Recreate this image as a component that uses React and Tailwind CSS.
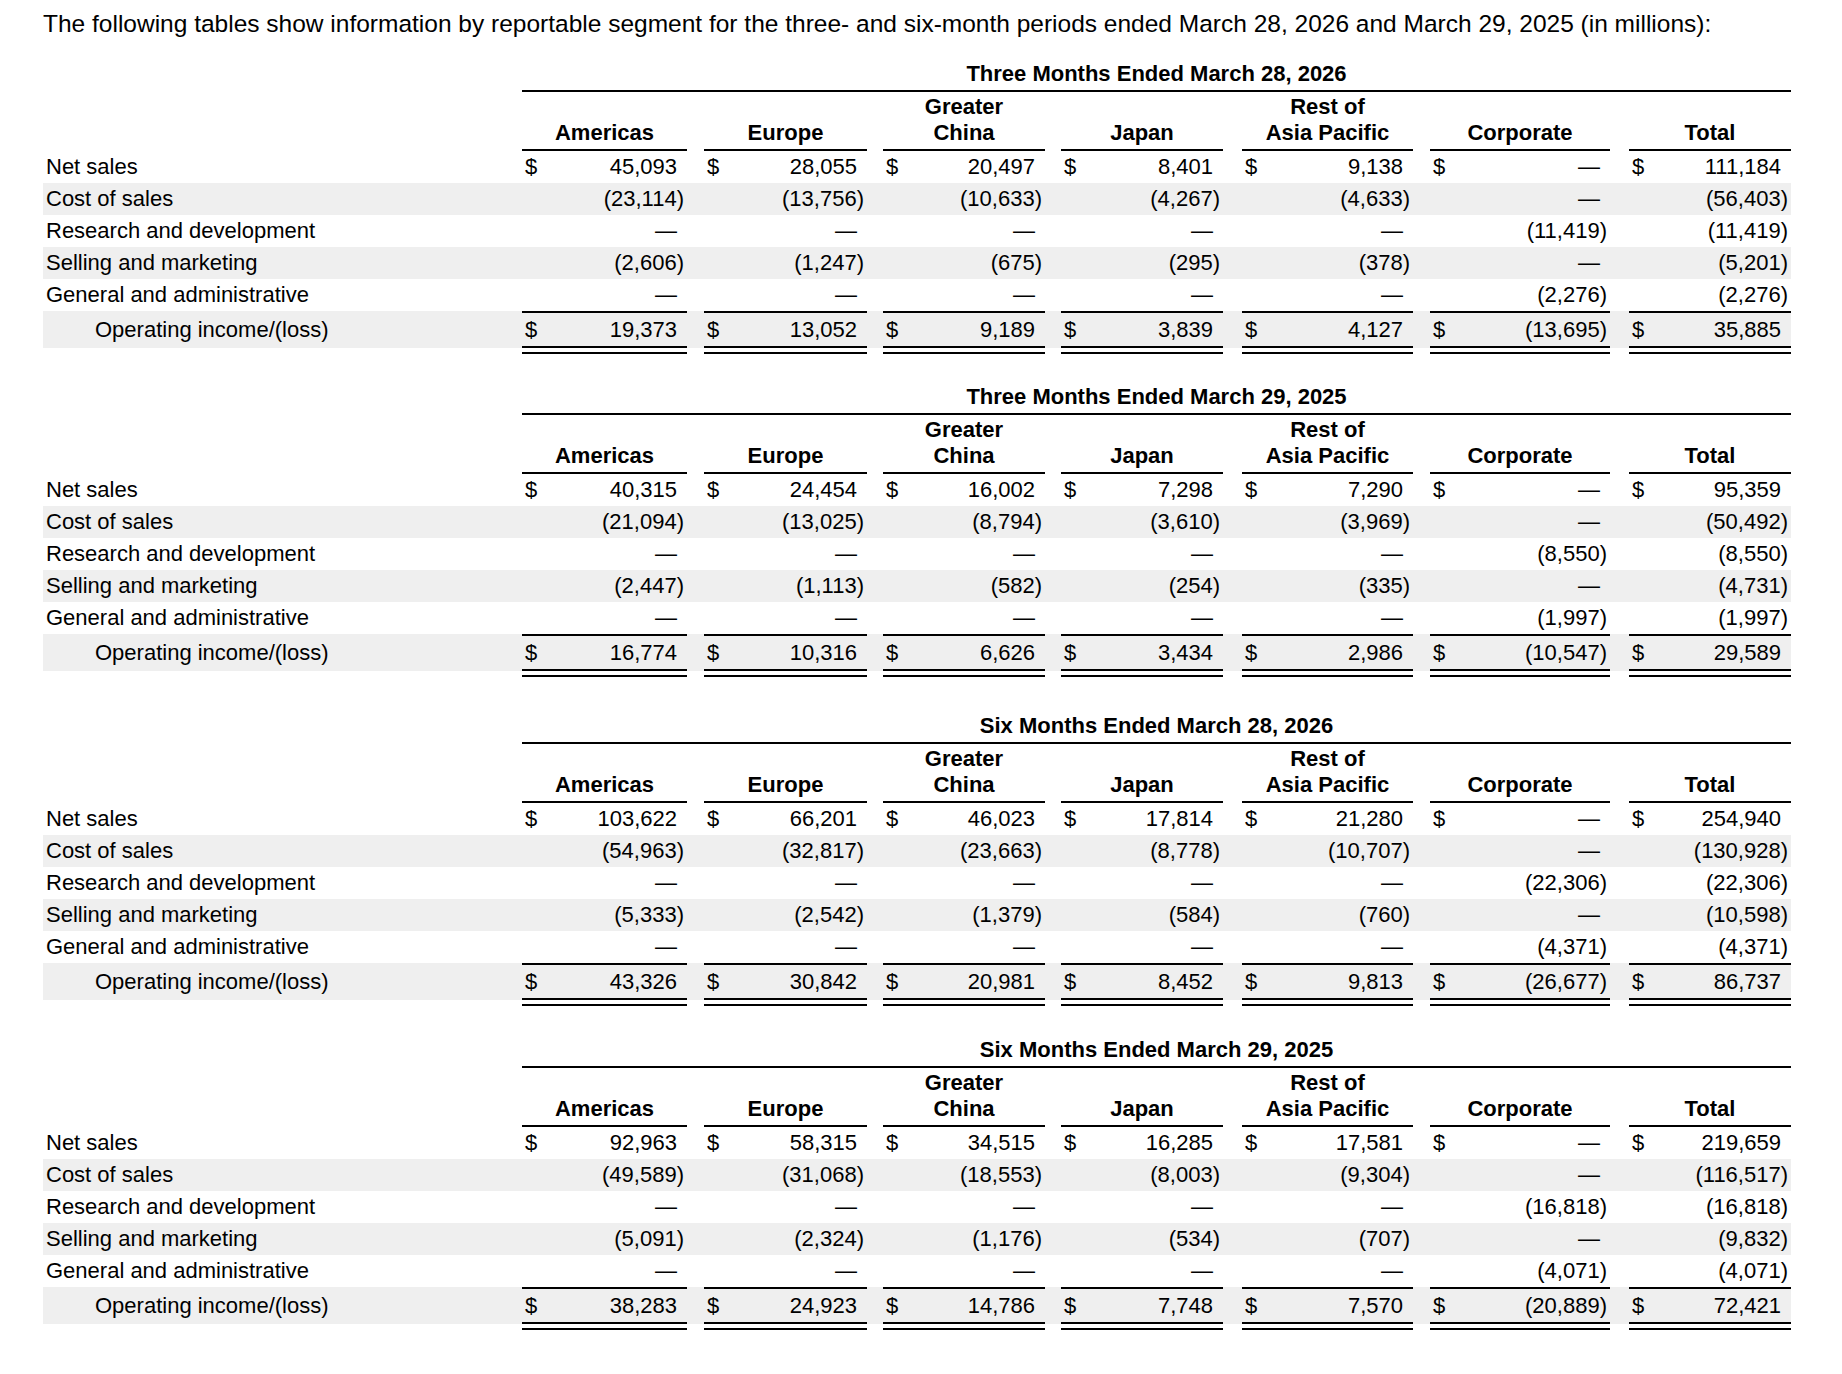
const COLS = [
  { name: ["", "Americas"], cls: "w-[165px]" },
  { name: ["", "Europe"], cls: "ml-[17px] w-[163px]" },
  { name: ["Greater", "China"], cls: "ml-[16px] w-[162px]" },
  { name: ["", "Japan"], cls: "ml-[16px] w-[162px]" },
  { name: ["Rest of", "Asia Pacific"], cls: "ml-[19px] w-[171px]" },
  { name: ["", "Corporate"], cls: "ml-[17px] w-[180px]" },
  { name: ["", "Total"], cls: "ml-[19px] w-[162px]" },
];

const D = "—";

const TABLES = [
  {
    title: "Three Months Ended March 28, 2026",
    mt: "mt-[24px]",
    rows: [
      ["45,093", "28,055", "20,497", "8,401", "9,138", D, "111,184"],
      ["(23,114)", "(13,756)", "(10,633)", "(4,267)", "(4,633)", D, "(56,403)"],
      [D, D, D, D, D, "(11,419)", "(11,419)"],
      ["(2,606)", "(1,247)", "(675)", "(295)", "(378)", D, "(5,201)"],
      [D, D, D, D, D, "(2,276)", "(2,276)"],
      ["19,373", "13,052", "9,189", "3,839", "4,127", "(13,695)", "35,885"],
    ],
  },
  {
    title: "Three Months Ended March 29, 2025",
    mt: "mt-[30px]",
    rows: [
      ["40,315", "24,454", "16,002", "7,298", "7,290", D, "95,359"],
      ["(21,094)", "(13,025)", "(8,794)", "(3,610)", "(3,969)", D, "(50,492)"],
      [D, D, D, D, D, "(8,550)", "(8,550)"],
      ["(2,447)", "(1,113)", "(582)", "(254)", "(335)", D, "(4,731)"],
      [D, D, D, D, D, "(1,997)", "(1,997)"],
      ["16,774", "10,316", "6,626", "3,434", "2,986", "(10,547)", "29,589"],
    ],
  },
  {
    title: "Six Months Ended March 28, 2026",
    mt: "mt-[36px]",
    rows: [
      ["103,622", "66,201", "46,023", "17,814", "21,280", D, "254,940"],
      ["(54,963)", "(32,817)", "(23,663)", "(8,778)", "(10,707)", D, "(130,928)"],
      [D, D, D, D, D, "(22,306)", "(22,306)"],
      ["(5,333)", "(2,542)", "(1,379)", "(584)", "(760)", D, "(10,598)"],
      [D, D, D, D, D, "(4,371)", "(4,371)"],
      ["43,326", "30,842", "20,981", "8,452", "9,813", "(26,677)", "86,737"],
    ],
  },
  {
    title: "Six Months Ended March 29, 2025",
    mt: "mt-[31px]",
    rows: [
      ["92,963", "58,315", "34,515", "16,285", "17,581", D, "219,659"],
      ["(49,589)", "(31,068)", "(18,553)", "(8,003)", "(9,304)", D, "(116,517)"],
      [D, D, D, D, D, "(16,818)", "(16,818)"],
      ["(5,091)", "(2,324)", "(1,176)", "(534)", "(707)", D, "(9,832)"],
      [D, D, D, D, D, "(4,071)", "(4,071)"],
      ["38,283", "24,923", "14,786", "7,748", "7,570", "(20,889)", "72,421"],
    ],
  },
];

const LABELS = [
  "Net sales",
  "Cost of sales",
  "Research and development",
  "Selling and marketing",
  "General and administrative",
];

const Value = ({ v, dollar }) => (
  <div className="flex h-full items-center justify-between">
    <span className="pl-[3px]">{dollar ? "$" : ""}</span>
    <span className={v.startsWith("(") ? "pr-[3px]" : "pr-[10px]"}>{v}</span>
  </div>
);

const SegmentTable = ({ table }) => {
  const last = table.rows[5];
  return (
    <div className={table.mt}>
      <div className="flex">
        <div className="w-[479px] shrink-0" />
        <div className="w-[1269px] border-b-2 border-black pb-[3px] text-center font-bold leading-[26px]">
          {table.title}
        </div>
      </div>

      <div className="flex">
        <div className="w-[479px] shrink-0" />
        {COLS.map((c) => (
          <div
            key={c.name[1]}
            className={`${c.cls} flex shrink-0 flex-col justify-end border-b-2 border-black pt-[2px] pb-[4px] text-center font-bold leading-[25.5px]`}
          >
            {c.name[0] && <div>{c.name[0]}</div>}
            <div>{c.name[1]}</div>
          </div>
        ))}
      </div>

      {LABELS.map((label, i) => (
        <div key={label} className={`flex h-[32px] leading-[32px] ${i % 2 === 1 ? "bg-[#efefef]" : ""}`}>
          <div className="w-[479px] shrink-0 pl-[3px]">{label}</div>
          {COLS.map((c, j) => (
            <div key={c.name[1]} className={`${c.cls} shrink-0`}>
              <Value v={table.rows[i][j]} dollar={i === 0} />
            </div>
          ))}
        </div>
      ))}

      <div className="flex h-[37px] bg-[#efefef]">
        <div className="w-[479px] shrink-0 pl-[52px] pt-[2px] leading-[33px]">Operating income/(loss)</div>
        {COLS.map((c, j) => (
          <div key={c.name[1]} className={`${c.cls} shrink-0 border-y-2 border-black leading-[33px]`}>
            <Value v={last[j]} dollar />
          </div>
        ))}
      </div>
      <div className="flex pt-[4px]">
        <div className="w-[479px] shrink-0" />
        {COLS.map((c) => (
          <div key={c.name[1]} className={`${c.cls} h-[2px] shrink-0 bg-black`} />
        ))}
      </div>
    </div>
  );
};

export default function App() {
  return (
    <div className="min-h-screen bg-white font-['Liberation_Sans',Arial,sans-serif] text-[22px] text-black">
      <div className="ml-[43px] w-[1748px]">
        <p className="whitespace-nowrap pt-[10px] text-[24.5px] leading-[27px]">
          The following tables show information by reportable segment for the three- and six-month periods ended
          March 28, 2026 and March 29, 2025 (in millions):
        </p>
        {TABLES.map((t) => (
          <SegmentTable key={t.title} table={t} />
        ))}
      </div>
    </div>
  );
}
